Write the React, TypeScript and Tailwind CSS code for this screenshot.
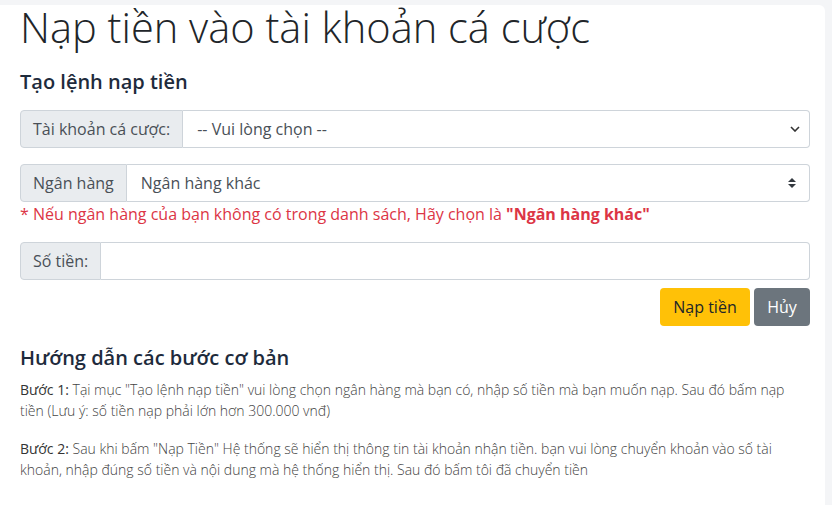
import React from 'react';

const font = { fontFamily: '"Open Sans", "Noto Sans", sans-serif' };

function Chevron() {
  return (
    <svg width="10" height="6" viewBox="0 0 10 6" className="absolute right-[9px] top-1/2 -translate-y-1/2">
      <path d="M1 1l4 4 4-4" fill="none" stroke="#333" strokeWidth="1.6" />
    </svg>
  );
}

function UpDown() {
  return (
    <svg width="8" height="10" viewBox="0 0 8 10" className="absolute right-[13px] top-1/2 -translate-y-1/2">
      <path d="M4 0L8 4H0z" fill="#343a40" />
      <path d="M4 10L0 6h8z" fill="#343a40" />
    </svg>
  );
}

function Group({ label, children }: { label: string; children?: React.ReactNode }) {
  return (
    <div className="flex h-[38px] text-[16px]">
      <div className="flex items-center px-3 bg-[#e9ecef] border border-[#ced4da] rounded-l-[4px] text-[#495057] whitespace-nowrap">
        {label}
      </div>
      <div className="relative flex-1 flex items-center pl-[14px] border border-l-0 border-[#ced4da] rounded-r-[4px] bg-white text-[#495057]">
        {children}
      </div>
    </div>
  );
}

export default function App() {
  return (
    <div className="min-h-[505px] bg-[#f4f5f7] pt-[5px] pr-[7px]" style={font}>
      <div className="bg-white rounded-tr-[6px] min-h-[500px] pl-5 pr-[15px]">
        <h1 className="text-[41.6px] leading-[44px] font-light text-[#212529]">Nạp tiền vào tài khoản cá cược</h1>

        <h2 className="mt-[21px] text-[20px] leading-[24px] font-semibold text-[#1e2b3c]">Tạo lệnh nạp tiền</h2>

        <div className="mt-4">
          <Group label="Tài khoản cá cược:">
            -- Vui lòng chọn --
            <Chevron />
          </Group>
        </div>

        <div className="mt-4">
          <Group label="Ngân hàng">
            Ngân hàng khác
            <UpDown />
          </Group>
        </div>
        <p className="text-[16px] leading-[24px] text-[#dc3545]">
          * Nếu ngân hàng của bạn không có trong danh sách, Hãy chọn là <b className="font-bold">"Ngân hàng khác"</b>
        </p>

        <div className="mt-4">
          <Group label="Số tiền:" />
        </div>

        <div className="mt-2 flex justify-end gap-1 text-[16px]">
          <button className="h-[38px] w-[90px] rounded-[4px] bg-[#ffc107] text-[#212529]">Nạp tiền</button>
          <button className="h-[38px] w-[56px] rounded-[4px] bg-[#6c757d] text-white">Hủy</button>
        </div>

        <h3 className="mt-5 text-[20px] leading-[24px] font-semibold text-[#1e2b3c]">Hướng dẫn các bước cơ bản</h3>

        <p className="mt-[9px] text-[14px] leading-[21px] font-light text-[#444]">
          <span className="font-normal text-[#333]">Bước 1:</span> Tại mục "Tạo lệnh nạp tiền" vui lòng chọn ngân hàng mà bạn có, nhập số tiền mà bạn muốn nạp. Sau đó bấm nạp tiền (Lưu ý: số tiền nạp phải lớn hơn 300.000 vnđ)
        </p>
        <p className="mt-[17px] text-[14px] leading-[21px] font-light text-[#444]">
          <span className="font-normal text-[#333]">Bước 2:</span> Sau khi bấm "Nạp Tiền" Hệ thống sẽ hiển thị thông tin tài khoản nhận tiền. bạn vui lòng chuyển khoản vào số tài khoản, nhập đúng số tiền và nội dung mà hệ thống hiển thị. Sau đó bấm tôi đã chuyển tiền
        </p>
      </div>
    </div>
  );
}
